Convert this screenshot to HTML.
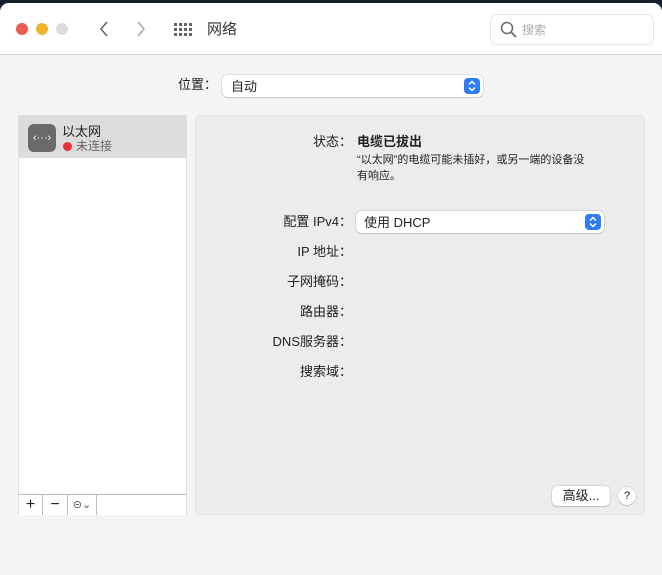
<!DOCTYPE html>
<html><head><meta charset="utf-8"><style>
*{margin:0;padding:0;box-sizing:border-box}
body{width:662px;height:575px;background:#15202e;font-family:"Liberation Sans","Noto Sans CJK SC",sans-serif;font-size:13px;color:#222;overflow:hidden;position:relative}
.win{position:absolute;left:0;top:3px;width:662px;height:572px;background:#f4f4f4;border-radius:9px 9px 0 0;overflow:hidden}
.tb{position:absolute;left:0;top:0;width:662px;height:52px;background:#fff;border-bottom:1px solid #d6d6d6}
.dot{position:absolute;top:20px;width:12px;height:12px;border-radius:50%}
.abs{position:absolute}
.sel{position:absolute;background:#fff;border-radius:5px;box-shadow:0 0 0 0.5px rgba(0,0,0,.18),0 1px 1px rgba(0,0,0,.12)}
.stp{position:absolute;right:3px;top:3px;width:16px;height:16px;border-radius:4px;background:#2f7cf6}
.lbl{position:absolute;width:156px;text-align:right}
</style></head><body>
<div class="win">
<div class="tb">
 <div class="dot" style="left:16px;background:#ee5a52"></div>
 <div class="dot" style="left:36px;background:#f2b32c"></div>
 <div class="dot" style="left:56px;background:#dcdcdc"></div>
 <svg class="abs" style="left:98px;top:18px" width="12" height="16"><path d="M9 1L3 8l6 7" stroke="#666" stroke-width="1.6" fill="none"/></svg>
 <svg class="abs" style="left:135px;top:18px" width="12" height="16"><path d="M3 1l6 7-6 7" stroke="#aaa" stroke-width="1.6" fill="none"/></svg>
 <svg class="abs" style="left:174px;top:20px" width="18" height="14" fill="#666"><g>
 <rect x="0" y="0" width="3" height="3"/><rect x="5" y="0" width="3" height="3"/><rect x="10" y="0" width="3" height="3"/><rect x="15" y="0" width="3" height="3"/>
 <rect x="0" y="5" width="3" height="3"/><rect x="5" y="5" width="3" height="3"/><rect x="10" y="5" width="3" height="3"/><rect x="15" y="5" width="3" height="3"/>
 <rect x="0" y="10" width="3" height="3"/><rect x="5" y="10" width="3" height="3"/><rect x="10" y="10" width="3" height="3"/><rect x="15" y="10" width="3" height="3"/></g></svg>
 <div class="abs" style="left:207px;top:15px;font-size:15px;color:#333">网络</div>
 <div class="abs" style="left:491px;top:12px;width:162px;height:29px;border-radius:6px;background:#fff;box-shadow:0 0 0 1px #e6e6e6"></div>
 <svg class="abs" style="left:500px;top:18px" width="18" height="18"><circle cx="7" cy="7" r="5.5" stroke="#666" stroke-width="1.5" fill="none"/><path d="M11 11l5 5" stroke="#666" stroke-width="1.7"/></svg>
 <div class="abs" style="left:522px;top:18px;color:#aaa;font-size:12px">搜索</div>
</div>
<div class="abs" style="left:178px;top:71px">位置：</div>
<div class="sel" style="left:222px;top:72px;width:261px;height:22px"><span class="abs" style="left:9px;top:1px">自动</span><div class="stp"><svg width="16" height="16"><path d="M5 6.5l3-3 3 3M5 9.5l3 3 3-3" stroke="#fff" stroke-width="1.5" fill="none"/></svg></div></div>

<div class="abs" style="left:18px;top:112px;width:169px;height:400px;background:#fff;border:1px solid #ddd">
 <div class="abs" style="left:0;top:0;width:167px;height:42px;background:#dcdcdc"></div>
 <div class="abs" style="left:9px;top:8px;width:28px;height:28px;border-radius:6px;background:#6a6a6a;color:#fff;font-size:11px;text-align:center;line-height:28px">‹···›</div>
 <div class="abs" style="left:43px;top:5px">以太网</div>
 <div class="abs" style="left:44px;top:26px;width:9px;height:9px;border-radius:50%;background:#e8323a"></div>
 <div class="abs" style="left:57px;top:21px;font-size:12px;color:#666">未连接</div>
 <div class="abs" style="left:0;top:378px;width:167px;height:21px;border-top:1px solid #bbb;background:#fff">
  <div class="abs" style="left:0;top:0;width:24px;height:20px;border-right:1px solid #bbb;text-align:center;font-size:16px;line-height:19px">+</div>
  <div class="abs" style="left:24px;top:0;width:25px;height:20px;border-right:1px solid #bbb;text-align:center;font-size:16px;line-height:19px">−</div>
  <div class="abs" style="left:49px;top:0;width:29px;height:20px;border-right:1px solid #bbb;text-align:center;font-size:11px;line-height:20px;color:#555">⊝⌄</div>
 </div>
</div>

<div class="abs" style="left:195px;top:112px;width:450px;height:400px;background:#ececec;border-radius:5px;border:1px solid #e2e2e2">
 <div class="lbl" style="left:0;top:15px">状态：</div>
 <div class="abs" style="left:161px;top:15px;font-weight:bold">电缆已拔出</div>
 <div class="abs" style="left:161px;top:36px;font-size:11px;line-height:16px;width:238px">“以太网”的电缆可能未插好，或另一端的设备没有响应。</div>
 <div class="lbl" style="left:0;top:95px">配置 IPv4：</div>
 <div class="sel" style="left:160px;top:95px;width:248px;height:22px"><span class="abs" style="left:8px;top:1px">使用 DHCP</span><div class="stp"><svg width="16" height="16"><path d="M5 6.5l3-3 3 3M5 9.5l3 3 3-3" stroke="#fff" stroke-width="1.5" fill="none"/></svg></div></div>
 <div class="lbl" style="left:0;top:125px">IP 地址：</div>
 <div class="lbl" style="left:0;top:155px">子网掩码：</div>
 <div class="lbl" style="left:0;top:185px">路由器：</div>
 <div class="lbl" style="left:0;top:215px">DNS服务器：</div>
 <div class="lbl" style="left:0;top:245px">搜索域：</div>
 <div class="sel" style="left:356px;top:370px;width:58px;height:20px;text-align:center;line-height:20px">高级...</div>
 <div class="sel" style="left:422px;top:371px;width:18px;height:18px;border-radius:50%;text-align:center;line-height:18px;font-size:11px">?</div>
</div>
</div>
</body></html>
